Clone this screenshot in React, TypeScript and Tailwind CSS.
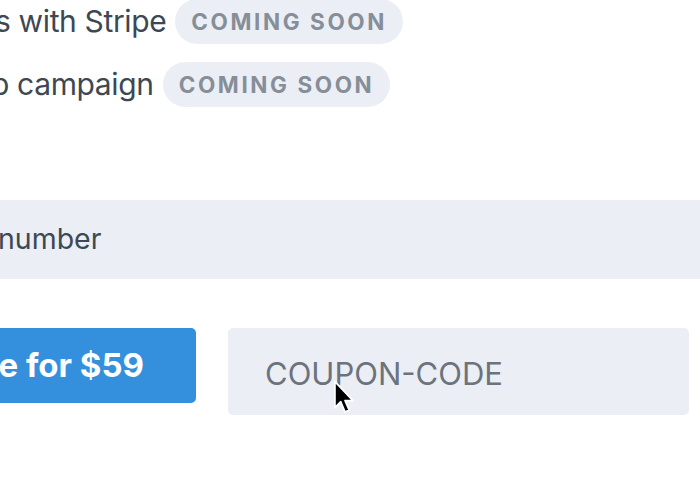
import React from "react";

function Badge() {
  return (
    <span className="ml-[9px] inline-flex h-[45px] items-center rounded-full bg-[#ebeef5] px-[16px] text-[22.5px] font-bold tracking-[0.115em] text-[#868e98]">
      COMING SOON
    </span>
  );
}

export default function App() {
  return (
    <div
      className="relative h-[500px] w-[700px] overflow-hidden bg-white"
      style={{ fontFamily: "Inter, 'Liberation Sans', sans-serif" }}
    >
      <div className="flex flex-col">
        <div className="mt-[-1px] flex h-[45px] items-center">
          <span className="ml-[-5px] whitespace-nowrap text-[30px] tracking-[-0.012em] text-[#3d4852]">s with Stripe</span>
          <Badge />
        </div>
        <div className="mt-[18px] flex h-[45px] items-center">
          <span className="ml-[-9px] whitespace-nowrap text-[30px] tracking-[-0.012em] text-[#3d4852]">p campaign</span>
          <Badge />
        </div>
        <div className="mt-[93px] flex h-[79px] w-full items-center bg-[#ebeef5]">
          <span className="ml-[-2px] text-[28.5px] text-[#3d4852]">number</span>
        </div>
        <div className="mt-[49px] flex items-start gap-[32px]">
          <button className="flex h-[75px] w-[196px] items-center justify-end overflow-hidden rounded-r-[5px] bg-[#3490dc] pr-[52px] text-[33px] font-bold text-white">
            <span className="whitespace-nowrap">e for $59</span>
          </button>
          <div className="flex h-[87px] w-[461px] items-center rounded-[5px] bg-[#ebeef5] pl-[37px] pt-[5px] text-[31px] text-[#6c737c]">
            COUPON-CODE
          </div>
        </div>
      </div>
      <svg
        className="absolute left-[333px] top-[380px]"
        width="24"
        height="36"
        viewBox="0 0 22 34"
      >
        <path
          d="M1.5 1.5 L1.5 26 L7 20.5 L11 30 L15 28.5 L11 19.5 L18.5 19.5 Z"
          fill="#000"
          stroke="#fff"
          strokeWidth="1.6"
          strokeLinejoin="round"
        />
      </svg>
    </div>
  );
}
